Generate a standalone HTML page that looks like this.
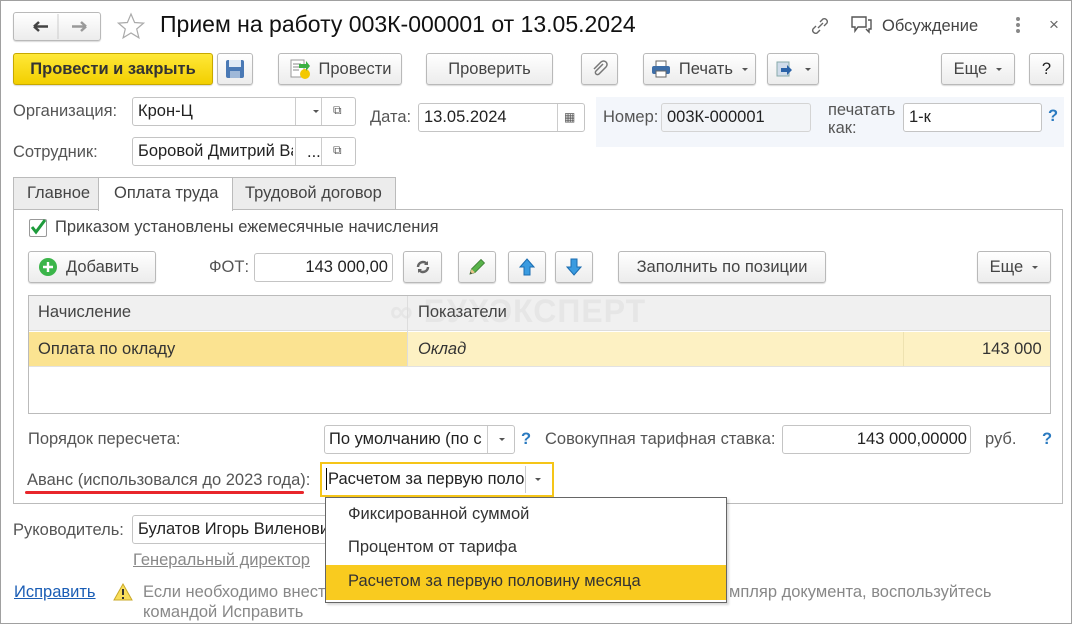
<!DOCTYPE html>
<html><head><meta charset="utf-8"><style>
*{box-sizing:border-box;margin:0;padding:0}
body{width:1072px;height:624px;overflow:hidden;background:#fff;font-family:"Liberation Sans",Arial,sans-serif;font-size:16.5px;color:#333;position:relative}
.a{position:absolute;white-space:nowrap}
.btn{position:absolute;border:1px solid #b9b9b9;border-radius:3px;background:linear-gradient(#fff,#ececec);box-shadow:0 1px 1px rgba(0,0,0,.15);display:flex;align-items:center;justify-content:center;color:#444}
.fld{position:absolute;border:1px solid #c4c4c4;border-radius:3px;background:#fff;display:flex;align-items:center;padding-left:5px;color:#222;overflow:hidden;white-space:nowrap}
.lbl{position:absolute;color:#555;white-space:nowrap}
.sep{position:absolute;top:0;bottom:0;border-left:1px solid #ccc}
.q{position:absolute;color:#2a7ac0;font-weight:bold}
.tri{display:inline-block;width:0;height:0;border-left:3px solid transparent;border-right:3px solid transparent;border-top:3px solid #555;vertical-align:middle}
.trib{position:absolute;width:0;height:0;border-left:3px solid transparent;border-right:3px solid transparent;border-top:3px solid #555}
</style></head><body>
<div class="a" style="left:0;top:0;width:1072px;height:624px;border:1px solid #a0a0a0"></div>

<div class="btn" style="left:13px;top:12px;width:88px;height:29px">
 <svg width="88" height="29"><path d="M20 14.5h14M20 14.5l5-4.5M20 14.5l5 4.5" stroke="#444" stroke-width="2.5" fill="none"/><line x1="44" y1="2" x2="44" y2="27" stroke="#ccc"/><path d="M58 14.5h14M72 14.5l-5-4.5M72 14.5l-5 4.5" stroke="#999" stroke-width="2.5" fill="none"/></svg>
</div>
<svg class="a" style="left:116px;top:12px" width="30" height="28"><path d="M15 2l3.6 8.5 9 .6-6.9 5.9 2.2 8.8L15 21l-7.9 4.8 2.2-8.8L2.4 11.1l9-.6z" fill="none" stroke="#aaa" stroke-width="1.2"/></svg>
<div class="a" style="left:160px;top:11px;font-size:23px;color:#111">Прием на работу 003К-000001 от 13.05.2024</div>
<svg class="a" style="left:808px;top:14px" width="24" height="24"><path d="M10 14l5-5M8 12l-3 3a3 3 0 004 4l3-3M16 12l3-3a3 3 0 00-4-4l-3 3" stroke="#666" stroke-width="1.4" fill="none"/></svg>
<svg class="a" style="left:850px;top:15px" width="24" height="22"><path d="M2 2h14v10H8l-3 4v-4H2zM18 5h3v9h-2v3l-3-3" stroke="#555" stroke-width="1.4" fill="none"/></svg>
<div class="a" style="left:882px;top:17px;color:#444">Обсуждение</div>
<div class="a" style="left:1016px;top:17px;width:4px"><div style="width:4px;height:4px;background:#888;border-radius:2px;margin-bottom:2px"></div><div style="width:4px;height:4px;background:#888;border-radius:2px;margin-bottom:2px"></div><div style="width:4px;height:4px;background:#888;border-radius:2px"></div></div>
<div class="a" style="left:1049px;top:15px;color:#666;font-size:17px">×</div>

<div class="btn" style="left:13px;top:53px;width:200px;height:32px;background:linear-gradient(#ffe838,#f2cf00);border-color:#c7a800;color:#333;font-weight:bold">Провести и закрыть</div>
<div class="btn" style="left:217px;top:53px;width:36px;height:32px"><svg width="20" height="20"><rect x="1" y="1" width="18" height="18" rx="2" fill="#4a79b5"/><rect x="4" y="1" width="12" height="7" fill="#dfe9f5"/><rect x="5" y="12" width="10" height="7" fill="#9fb8d8"/></svg></div>
<div class="btn" style="left:278px;top:53px;width:124px;height:32px"><svg width="22" height="22" style="margin-right:8px"><rect x="2" y="2" width="13" height="17" fill="#fff" stroke="#999"/><path d="M4 6h8M4 9h8M4 12h6" stroke="#888"/><circle cx="16" cy="16" r="5" fill="#f3c800"/><path d="M10 6h7v-3l4 5-4 5v-3h-7z" fill="#3cb043"/></svg>Провести</div>
<div class="btn" style="left:426px;top:53px;width:127px;height:32px">Проверить</div>
<div class="btn" style="left:581px;top:53px;width:37px;height:32px"><svg width="18" height="18"><path d="M12 4l-7 7a2 2 0 003 3l7-7a3.5 3.5 0 00-5-5l-7 7" stroke="#777" stroke-width="1.5" fill="none"/></svg></div>
<div class="btn" style="left:643px;top:53px;width:113px;height:32px"><svg width="20" height="18" style="margin-right:8px"><rect x="5" y="1" width="10" height="6" fill="#fff" stroke="#666"/><rect x="1" y="6" width="18" height="8" rx="2" fill="#3d6ea8"/><rect x="5" y="11" width="10" height="6" fill="#fff" stroke="#666"/></svg>Печать&nbsp;&nbsp;<span class="tri"></span></div>
<div class="btn" style="left:767px;top:53px;width:52px;height:32px"><svg width="20" height="18" style="margin-right:10px"><rect x="2" y="2" width="12" height="14" fill="#d0dcea" stroke="#8aa"/><path d="M6 8h6v-3l5 5-5 5v-3H6z" fill="#2b63a8"/></svg><span class="tri"></span></div>
<div class="btn" style="left:941px;top:53px;width:74px;height:32px">Еще&nbsp;&nbsp;<span class="tri"></span></div>
<div class="btn" style="left:1029px;top:53px;width:35px;height:32px;color:#222">?</div>

<div class="lbl" style="left:13px;top:102px">Организация:</div>
<div class="fld" style="left:132px;top:97px;width:224px;height:29px">Крон-Ц<div class="sep" style="left:162px"></div><div class="trib" style="left:180px;top:12px"></div><div class="sep" style="left:188px"></div><div class="a" style="left:200px;top:5px;font-size:12px;color:#555">⧉</div></div>
<div class="lbl" style="left:370px;top:108px">Дата:</div>
<div class="fld" style="left:418px;top:103px;width:167px;height:29px">13.05.2024<div class="sep" style="left:138px"></div><div class="a" style="left:145px;top:6px;font-size:12px;color:#555">▦</div></div>
<div class="a" style="left:596px;top:97px;width:468px;height:50px;background:#f3f6fb"></div>
<div class="lbl" style="left:603px;top:108px">Номер:</div>
<div class="fld" style="left:661px;top:103px;width:150px;height:29px;background:#f2f4f7;border-color:#d4d4d4">003К-000001</div>
<div class="lbl" style="left:828px;top:101px;line-height:18px;white-space:normal;width:72px">печатать как:</div>
<div class="fld" style="left:903px;top:103px;width:139px;height:29px">1-к</div>
<div class="q" style="left:1048px;top:107px">?</div>

<div class="lbl" style="left:13px;top:143px">Сотрудник:</div>
<div class="fld" style="left:132px;top:137px;width:224px;height:29px">Боровой Дмитрий Валентинович<div class="a" style="left:160px;top:0;bottom:0;width:64px;background:#fff"></div><div class="sep" style="left:162px"></div><div class="a" style="left:174px;top:5px">...</div><div class="sep" style="left:188px"></div><div class="a" style="left:200px;top:5px;font-size:12px;color:#555">⧉</div></div>

<div class="a" style="left:13px;top:177px;width:86px;height:33px;background:#ececec;border:1px solid #bbb;padding:6px 0 0 13px;color:#444">Главное</div>
<div class="a" style="left:232px;top:177px;width:164px;height:33px;background:#ececec;border:1px solid #bbb;padding:6px 0 0 12px;color:#444">Трудовой договор</div>
<div class="a" style="left:13px;top:209px;width:1050px;height:295px;border:1px solid #bbb"></div>
<div class="a" style="left:98px;top:177px;width:135px;height:34px;background:#fff;border:1px solid #bbb;border-bottom:none;padding:6px 0 0 15px;color:#444">Оплата труда</div>

<div class="a" style="left:29px;top:219px;width:18px;height:18px;border:1px solid #999;border-radius:2px;background:#fff"><svg width="18" height="18" style="position:absolute;left:-1px;top:-2px"><path d="M3 9l4 5 9-12" stroke="#1e9b3c" stroke-width="3" fill="none"/></svg></div>
<div class="lbl" style="left:55px;top:218px;color:#444">Приказом установлены ежемесячные начисления</div>

<div class="btn" style="left:28px;top:251px;width:128px;height:32px;justify-content:flex-start;padding-left:9px"><svg width="20" height="20" style="margin-right:8px"><circle cx="10" cy="10" r="9" fill="#3bb54a"/><path d="M10 5v10M5 10h10" stroke="#fff" stroke-width="2.4"/></svg>Добавить</div>
<div class="lbl" style="left:209px;top:258px">ФОТ:</div>
<div class="fld" style="left:254px;top:253px;width:139px;height:29px;justify-content:flex-end;padding-right:4px">143 000,00</div>
<div class="btn" style="left:403px;top:251px;width:39px;height:32px"><svg width="16" height="16"><path d="M3 8a5 5 0 019-3M13 8a5 5 0 01-9 3" stroke="#666" stroke-width="2.5" fill="none"/><path d="M13 2v4H9zM3 14v-4h4z" fill="#666"/></svg></div>
<div class="btn" style="left:458px;top:251px;width:38px;height:32px"><svg width="20" height="20"><path d="M3 17l1.5-5L14 2.5l3.5 3.5L8 15.5z" fill="#58b24a" stroke="#3a7a30" stroke-width=".8"/><path d="M3 17l1.5-5 3.5 3.5z" fill="#e9c48a"/><path d="M3 17l.6-2 1.4 1.4z" fill="#333"/></svg></div>
<div class="btn" style="left:508px;top:251px;width:38px;height:32px"><svg width="16" height="18"><path d="M8 1l7 8h-4v8H5V9H1z" fill="#3a9be0" stroke="#1b6cb0"/></svg></div>
<div class="btn" style="left:555px;top:251px;width:38px;height:32px"><svg width="16" height="18"><path d="M8 17l7-8h-4V1H5v8H1z" fill="#3a9be0" stroke="#1b6cb0"/></svg></div>
<div class="btn" style="left:618px;top:251px;width:208px;height:32px">Заполнить по позиции</div>
<div class="btn" style="left:977px;top:251px;width:74px;height:32px">Еще&nbsp;&nbsp;<span class="tri"></span></div>

<div class="a" style="left:28px;top:295px;width:1023px;height:119px;border:1px solid #bbb"></div>
<div class="a" style="left:29px;top:296px;width:1021px;height:35px;background:#f0f0f0;border-bottom:1px solid #ddd"></div>
<div class="a" style="left:390px;top:293px;font-size:32px;font-weight:bold;color:#e6e6e6;letter-spacing:1px">&#8734; БУХЭКСПЕРТ</div>
<div class="a" style="left:407px;top:296px;height:70px;border-left:1px solid #ddd"></div>
<div class="lbl" style="left:38px;top:303px;color:#444">Начисление</div>
<div class="lbl" style="left:418px;top:303px;color:#444">Показатели</div>
<div class="a" style="left:29px;top:332px;width:378px;height:34px;background:#fbe391"></div>
<div class="a" style="left:408px;top:332px;width:642px;height:34px;background:#fdf1c3"></div>
<div class="a" style="left:903px;top:332px;height:34px;border-left:1px solid #eee2b0"></div>
<div class="a" style="left:29px;top:366px;width:1021px;border-top:1px solid #e2e2e2"></div>
<div class="lbl" style="left:38px;top:340px;color:#333">Оплата по окладу</div>
<div class="lbl" style="left:418px;top:340px;color:#333;font-style:italic">Оклад</div>
<div class="lbl" style="left:982px;top:340px;color:#333">143 000</div>

<div class="lbl" style="left:28px;top:430px">Порядок пересчета:</div>
<div class="fld" style="left:324px;top:425px;width:191px;height:29px;padding-left:4px">По умолчанию (по с<div class="sep" style="left:162px"></div><div class="trib" style="left:174px;top:12px"></div></div>
<div class="q" style="left:521px;top:430px">?</div>
<div class="lbl" style="left:545px;top:430px">Совокупная тарифная ставка:</div>
<div class="fld" style="left:782px;top:425px;width:189px;height:29px;justify-content:flex-end;padding-right:3px">143 000,00000</div>
<div class="lbl" style="left:985px;top:430px">руб.</div>
<div class="q" style="left:1042px;top:430px">?</div>

<div class="lbl" style="left:27px;top:471px">Аванс (использовался до 2023 года):</div>
<div class="a" style="left:25px;top:491px;width:279px;height:3px;background:#e8262b;border-radius:2px"></div>
<div class="a" style="left:320px;top:462px;width:234px;height:35px;border:2px solid #f5c518;background:#fff"></div>
<div class="a" style="left:326px;top:468px;width:198px;overflow:hidden;color:#222;border-left:1px solid #000;padding-left:1px;line-height:22px">Расчетом за первую половину</div>
<div class="a" style="left:525px;top:466px;height:27px;border-left:1px solid #ccc"></div>
<div class="trib" style="left:535px;top:478px"></div>

<div class="lbl" style="left:13px;top:521px">Руководитель:</div>
<div class="fld" style="left:132px;top:515px;width:210px;height:29px">Булатов Игорь Виленович</div>
<div class="lbl" style="left:133px;top:551px;color:#888;text-decoration:underline">Генеральный директор</div>
<div class="lbl" style="left:14px;top:583px;color:#1a5db5;text-decoration:underline">Исправить</div>
<svg class="a" style="left:112px;top:582px" width="22" height="20"><path d="M11 2l9 16H2z" fill="#f9de5a" stroke="#c9a92a"/><path d="M11 7v6M11 15v2" stroke="#333" stroke-width="2"/></svg>
<div class="lbl" style="left:143px;top:582px;color:#888;line-height:20px">Если необходимо внести исправления<br>командой Исправить</div>
<div class="lbl" style="left:729px;top:582px;color:#888;line-height:20px">мпляр документа, воспользуйтесь</div>

<div class="a" style="left:325px;top:497px;width:402px;height:106px;border:1px solid #666;background:#fff;box-shadow:2px 2px 2px rgba(0,0,0,.15)">
 <div style="height:33px;padding:7px 0 0 22px;color:#333">Фиксированной суммой</div>
 <div style="height:34px;padding:7px 0 0 22px;color:#333">Процентом от тарифа</div>
 <div style="height:35px;padding:7px 0 0 22px;color:#333;background:#f9cb1f">Расчетом за первую половину месяца</div>
</div>
</body></html>
